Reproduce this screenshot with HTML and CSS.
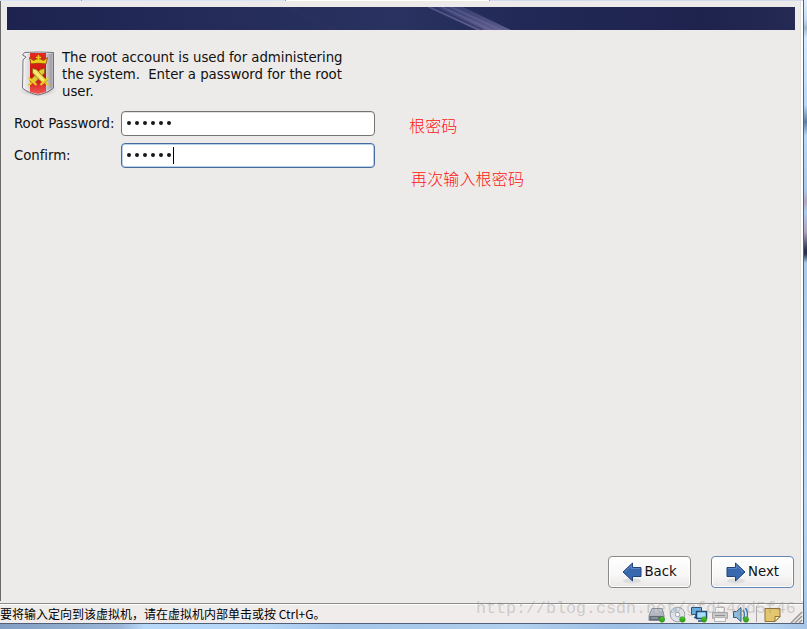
FILE: index.html
```html
<!DOCTYPE html>
<html lang="zh-CN">
<head>
  <meta charset="UTF-8">
  <title>Root Password</title>
  <link rel="stylesheet" href="styles.css">
</head>
<body>
  <div class="window">
    <div class="tabs"><span class="tab"></span><span class="tab tab_wide"></span><span class="tab tab_active"></span></div>
    <div class="screen">
      <div class="banner">
        <svg width="788" height="23" viewBox="0 0 788 23">
          <defs>
            <linearGradient id="bannerBg">
              <stop offset="0" stop-color="#1d234e"/>
              <stop offset=".25" stop-color="#242b59"/>
              <stop offset=".5" stop-color="#293260"/>
              <stop offset=".65" stop-color="#222956"/>
              <stop offset=".88" stop-color="#1e234e"/>
              <stop offset="1" stop-color="#242a54"/>
            </linearGradient>
            <linearGradient id="ray" x2="0" y2="1">
              <stop offset="0" stop-color="#59609b" stop-opacity=".55"/>
              <stop offset="1" stop-color="#807aab"/>
            </linearGradient>
          </defs>
          <rect width="788" height="23" fill="url(#bannerBg)"/>
          <path d="M275 0h12l48 23h-14z" fill="#30365f" opacity=".3"/>
          <path d="M420 0h36l48 23h-33z" fill="url(#ray)" opacity=".65"/>
          <path d="M422 0l49 23M435 0l49 23M444 0l50 23" stroke="#7d78ac" stroke-width="1.6" opacity=".35"/>
          <path d="M427 0l49 23" stroke="#252b58" stroke-width="2" opacity=".5"/>
        </svg>
      </div>
      <div class="intro">
        <svg class="shield" width="38" height="50" viewBox="0 0 38 50">
          <defs>
            <linearGradient id="steel">
              <stop offset="0" stop-color="#f4f4f4"/>
              <stop offset=".35" stop-color="#c9c8cc"/>
              <stop offset=".7" stop-color="#dddce0"/>
              <stop offset="1" stop-color="#8e8a94"/>
            </linearGradient>
            <linearGradient id="red" x2="0" y2="1">
              <stop offset="0" stop-color="#e52a22"/>
              <stop offset=".6" stop-color="#c9100e"/>
              <stop offset="1" stop-color="#f45752"/>
            </linearGradient>
            <radialGradient id="shade">
              <stop offset="0" stop-color="#666" stop-opacity=".6"/>
              <stop offset="1" stop-color="#888" stop-opacity="0"/>
            </radialGradient>
          </defs>
          <ellipse cx="19" cy="42" rx="19" ry="7" fill="url(#shade)"/>
          <path d="M5.500 4.500Q19 3.500 34.500 4.500V40Q29 45 19 47Q9 45 3.500 40Q4 26 4 12L7 9L3.500 7z" fill="url(#steel)" stroke="#737178"/>
          <path d="M6.500 5.500Q19 4.500 33.300 5.500V39.500Q28 44 19 46Q10 44 4.800 39Q5.500 25 5.200 13L8.500 9z" fill="none" stroke="#fff" opacity=".4"/>
          <path d="M11 5h16v39l-8 2-8-2z" fill="url(#red)"/>
          <path d="M10.500 9.500l4 3 3-1.500h4l3 1.500 4-3-1.500 6.500Q19.500 14.500 12 16z" fill="#eccc19" stroke="#91400c" stroke-width=".8"/>
          <path d="M19.500 7v5M17 9.500h5" stroke="#e9ce20" stroke-width="1.500"/>
          <path d="M25.500 20.500v4.500L14.500 36l-3.500-3.500L21.500 21.500z" fill="#e3ca35" stroke="#8b670c" stroke-width=".8"/>
          <path d="M13.500 20.500v4.500L24.500 36l3.500-3.500L17.500 21.500z" fill="#f0de5c" stroke="#8b670c" stroke-width=".8"/>
          <path d="M14.500 22l11 11.500" stroke="#fff5a8"/>
          <path d="M9.500 29.500l8 7.500M29.500 29.500l-8 7.500M9.500 37.500l3-3M29.500 37.500l-3-3" stroke="#e9cd25" stroke-width="2.200"/>
        </svg>
        <p class="intro_text">The root account is used for administering<br>the system.&nbsp; Enter a password for the root<br>user.</p>
      </div>
      <div class="form">
        <div class="row">
          <label class="label">Root Password:</label>
          <div class="field"><i></i><i></i><i></i><i></i><i></i><i></i></div>
          <span class="note">根密码</span>
        </div>
        <div class="row">
          <label class="label">Confirm:</label>
          <div class="field field_focus"><i></i><i></i><i></i><i></i><i></i><i></i><b class="caret"></b></div>
          <span class="note note_low">再次输入根密码</span>
        </div>
      </div>
      <div class="actions">
        <div class="btn">
          <svg width="20" height="22" viewBox="0 0 20 22">
            <ellipse cx="10" cy="19" rx="9" ry="2.500" fill="#ddd"/>
            <path d="M1 10L10.500 1v4.500H19v9h-8.500V19z" fill="#3868ad" stroke="#20457e"/>
            <path d="M3 10L9.500 3.600V6.500H18" fill="none" stroke="#6d94cb" stroke-width=".7"/>
          </svg>
          <span>Back</span>
        </div>
        <div class="btn btn_next">
          <svg width="20" height="22" viewBox="0 0 20 22">
            <ellipse cx="10" cy="19" rx="9" ry="2.500" fill="#ddd"/>
            <path d="M19 10L9.500 1v4.500H1v9h8.500V19z" fill="#3868ad" stroke="#20457e"/>
            <path d="M2 6.500h8.500V3.600L17 10" fill="none" stroke="#6d94cb" stroke-width=".7"/>
          </svg>
          <span>Next</span>
        </div>
      </div>
    </div>
    <div class="status">
      <span class="status_text">要将输入定向到该虚拟机，请在虚拟机内部单击或按 Ctrl+G。</span>
      <svg class="tray" width="156" height="19" viewBox="0 0 156 19">
        <defs>
          <linearGradient id="disk" x2="0" y2="1">
            <stop offset="0" stop-color="#cbd0d8"/>
            <stop offset="1" stop-color="#959da9"/>
          </linearGradient>
          <linearGradient id="led" x2="0" y2="1">
            <stop offset="0" stop-color="#56c82e"/>
            <stop offset="1" stop-color="#229a0e"/>
          </linearGradient>
        </defs>
        <path d="M5 3.500h10l2 7v5H2v-5z" fill="url(#disk)" stroke="#858c95"/>
        <path d="M2.500 11h14v4h-14z" fill="#626a74"/>
        <path d="M4 13h7" stroke="#aeb6bf"/>
        <circle cx="30.500" cy="9.500" r="7.300" fill="#dfe3e8" stroke="#98a0a8"/>
        <path d="M30.500 9.500L25 4.500A7 7 0 0 1 30 2.500zM30.500 9.500l6 3a7 7 0 0 1-4 3.500z" fill="#b4c4d6"/>
        <circle cx="30.500" cy="9.500" r="2.200" fill="#fff" stroke="#9ba2a9"/>
        <path d="M44.500 2.500h10v7h-10z" fill="#63b3e9" stroke="#234f7d"/>
        <path d="M47 12.500h4M49 10v2" stroke="#234f7d" stroke-width="1.500"/>
        <path d="M49.500 6.500h10v7h-10z" fill="#a5ddfb" stroke="#1c4876" stroke-width="1.500"/>
        <path d="M51 16h7" stroke="#234f7d" stroke-width="1.500"/>
        <path d="M68.500 2.500h9v6h-9z" fill="#f6f5f5" stroke="#c1bebe"/>
        <path d="M65.500 7.500h15v6h-15z" fill="#c9c7c8" stroke="#aaa8aa"/>
        <path d="M67.500 12.500h11v4h-11z" fill="#f6f5f5" stroke="#b5b3b4"/>
        <path d="M68 10.500h10" stroke="#929092"/>
        <path d="M86.500 6.500h3l4.500-4v14l-4.500-4h-3z" fill="#8abce2" stroke="#315879"/>
        <path d="M96 5q3 4.500 0 9M98.500 3q4 6.500 0 13" fill="none" stroke="#3878b3" stroke-width="1.500"/>
        <g fill="url(#led)" stroke="#369023" stroke-width=".6">
          <circle cx="15" cy="14.500" r="2.700"/>
          <circle cx="35.500" cy="14.500" r="2.700"/>
          <circle cx="57" cy="14.500" r="2.700"/>
          <circle cx="99" cy="14.500" r="2.700"/>
        </g>
        <path d="M109.500 1v16" stroke="#a9a6a6"/>
        <path d="M118 3.500h15v8l-5 5h-10z" fill="#e3c66d" stroke="#8b7339"/>
        <path d="M133 11.500h-5v5z" fill="#fff0b7" stroke="#8b7339"/>
        <path d="M144 18L155 7M148 18l7-7M152 18l3-3" stroke="#999696" stroke-width="1.500"/>
      </svg>
      <span class="watermark">http://blog.csdn.net/gfd54gd5f46</span>
    </div>
  </div>
  <div class="edge"></div>
</body>
</html>
```
FILE: styles.css
```css
* {
  box-sizing: border-box;
}
body {
  margin: 0;
  width: 807px;
  height: 629px;
  display: grid;
  grid-template-columns: 804px 3px;
  grid-template-rows: 624px;
  overflow: hidden;
  background: linear-gradient(90deg, #829fc3 0, #9bb6d8 120px, #b8d8fa 145px, #b8d8fa 260px, #a4c5e8 340px, #b1cfee 520px, #9dbfe4 620px, #b6d5f3 760px, #a6c5e7);
  font-family: "DejaVu Sans", sans-serif;
  font-size: 13.33px;
  letter-spacing: -.06px;
  color: #111;
}
.window {
  display: flex;
  flex-direction: column;
  background: #edebea;
  border-right: 1px solid #536078;
  border-bottom: 1px solid #536078;
}
.tabs {
  height: 1px;
  display: flex;
  background: #d1d9ed;
}
.tab {
  width: 82px;
  background: #d9e5f7;
  border-right: 1px solid #8c9bb8;
}
.tab_wide {
  width: 204px;
}
.tab_active {
  width: 204px;
  background: #fff;
}
.screen {
  height: 600px;
  display: flex;
  flex-direction: column;
  padding: 6px 7px 0 6px;
  background: #edebea;
  border-left: 1px solid #696969;
  border-right: 2px solid #fff;
  box-shadow: inset -1px 0 #e1dfde;
}
.banner,
.banner svg {
  height: 23px;
  display: block;
}
.intro {
  display: flex;
  height: 80px;
  padding: 18px 0 0 12px;
}
.shield {
  flex: none;
}
.intro_text {
  margin: 1px 0 0 5px;
  line-height: 17px;
  white-space: nowrap;
}
.form {
  display: flex;
  flex-direction: column;
  gap: 7px;
  padding: 1px 0 0 7px;
}
.row {
  display: flex;
  height: 25px;
}
.label {
  width: 107px;
  line-height: 26px;
  white-space: nowrap;
}
.field {
  width: 254px;
  height: 25px;
  display: flex;
  align-items: center;
  gap: 4px;
  padding: 0 0 1px 5px;
  background: #fff;
  border: 1px solid #757472;
  border-radius: 4px;
  box-shadow: inset 0 1px #e3e2e1;
}
.field i {
  width: 4px;
  height: 4px;
  border-radius: 50%;
  background: #181818;
}
.field_focus {
  border-color: #476b9e;
  box-shadow: inset 0 0 0 1px #b7d2ee;
}
.caret {
  width: 1px;
  height: 17px;
  margin-left: -2px;
  background: #000;
}
.note {
  margin: 2px 0 0 34px;
  font: 300 16px/24px "Noto Sans CJK SC", sans-serif;
  letter-spacing: .15px;
  white-space: nowrap;
  color: #ff1414;
}
.note_low {
  margin: 23px 0 0 36px;
}
.actions {
  margin-top: auto;
  display: flex;
  justify-content: flex-end;
  gap: 20px;
  padding-bottom: 13px;
}
.btn {
  width: 83px;
  height: 32px;
  display: flex;
  align-items: center;
  justify-content: center;
  gap: 2px;
  border: 1px solid #8c8a88;
  border-radius: 4px;
  background: linear-gradient(#fff, #f8f7f7 60%, #e9e7e6);
  box-shadow: inset 0 0 0 1px #fff;
}
.btn svg {
  margin-top: 1px;
}
.btn span {
  line-height: 30px;
  margin-top: -1px;
}
.btn_next {
  border-color: #6486b5;
}
.status {
  position: relative;
  margin-top: 2px;
  height: 20px;
  display: flex;
  justify-content: space-between;
  border-top: 1px solid #8e8c8b;
  background: #f0eceb;
  box-shadow: inset 0 1px #fff;
}
.status_text {
  font: 12px/20px "Noto Sans CJK SC", sans-serif;
  letter-spacing: 0;
  color: #000;
  white-space: nowrap;
}
.tray {
  margin-top: 1px;
}
.watermark {
  position: absolute;
  left: 476px;
  top: -7px;
  font: 16.67px/24px "Liberation Mono", monospace;
  letter-spacing: 0;
  color: rgba(150, 145, 140, .38);
  white-space: nowrap;
}
.edge {
  background: linear-gradient(#e0efff 0, #c3dcf5 20px, #a2b8cf 28px, #d6eaff 38px, #b7d9fb 105px, #5c7da9 122px, #b7d9fb 136px, #a9c9ec 190px, #b4a6bf 202px, #abcdf0 212px, #b0a2be 232px, #28334f 250px, #28334f 254px, #a9cbee 263px, #b8d8f6 500px, #a6c9eb);
}
```
